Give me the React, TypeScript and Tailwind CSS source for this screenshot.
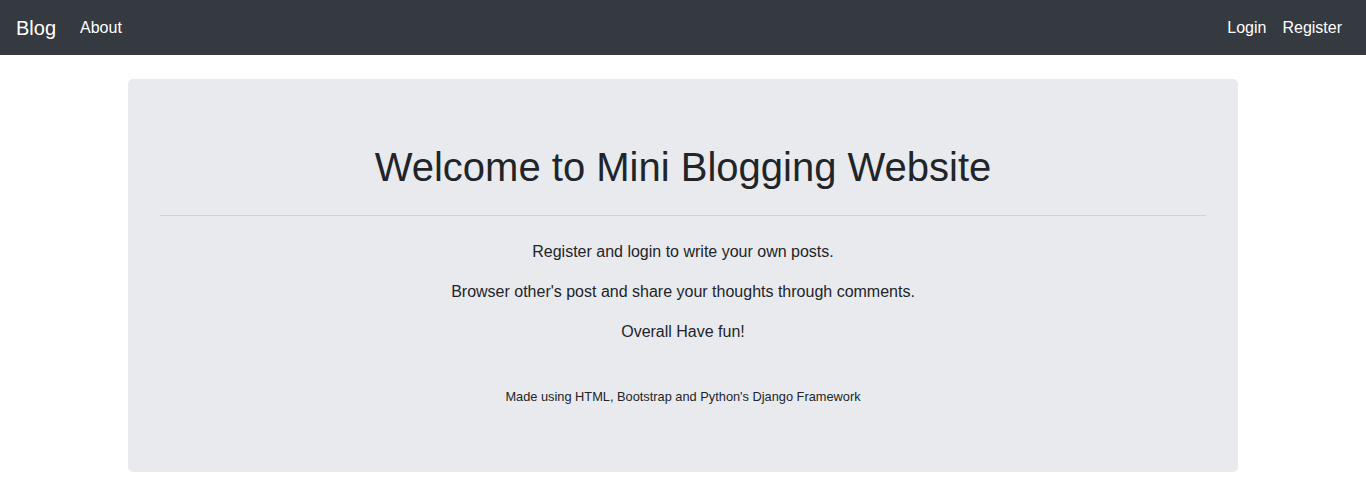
export default function App() {
  return (
    <div className="min-h-screen bg-white font-['Liberation_Sans',Arial,sans-serif] text-[#212529]">
      {/* Navbar */}
      <nav className="flex h-[55px] items-center justify-between bg-[#343a40] px-4">
        <div className="flex items-center">
          <a href="#" className="mr-4 text-[20px] leading-[30px] text-white">
            Blog
          </a>
          <a href="#" className="px-2 text-base leading-6 text-white">
            About
          </a>
        </div>
        <div className="flex items-center">
          <a href="#" className="px-2 text-base leading-6 text-white">
            Login
          </a>
          <a href="#" className="px-2 text-base leading-6 text-white">
            Register
          </a>
        </div>
      </nav>

      {/* Jumbotron */}
      <div className="mx-auto mt-6 w-[1110px]">
        <div className="rounded-[5px] bg-[#e9eaee] px-8 pt-16 pb-16 text-center">
          <h1 className="mb-6 text-[40px] leading-[48px] font-normal">
            Welcome to Mini Blogging Website
          </h1>
          <hr className="mb-6 border-t border-black/10" />
          <p className="mb-4 text-base leading-6">
            Register and login to write your own posts.
          </p>
          <p className="mb-4 text-base leading-6">
            Browser other's post and share your thoughts through comments.
          </p>
          <p className="mb-4 text-base leading-6">Overall Have fun!</p>
          <p className="pt-[26px] text-[12.8px] leading-[22px]">
            Made using HTML, Bootstrap and Python's Django Framework
          </p>
        </div>
      </div>
    </div>
  );
}
